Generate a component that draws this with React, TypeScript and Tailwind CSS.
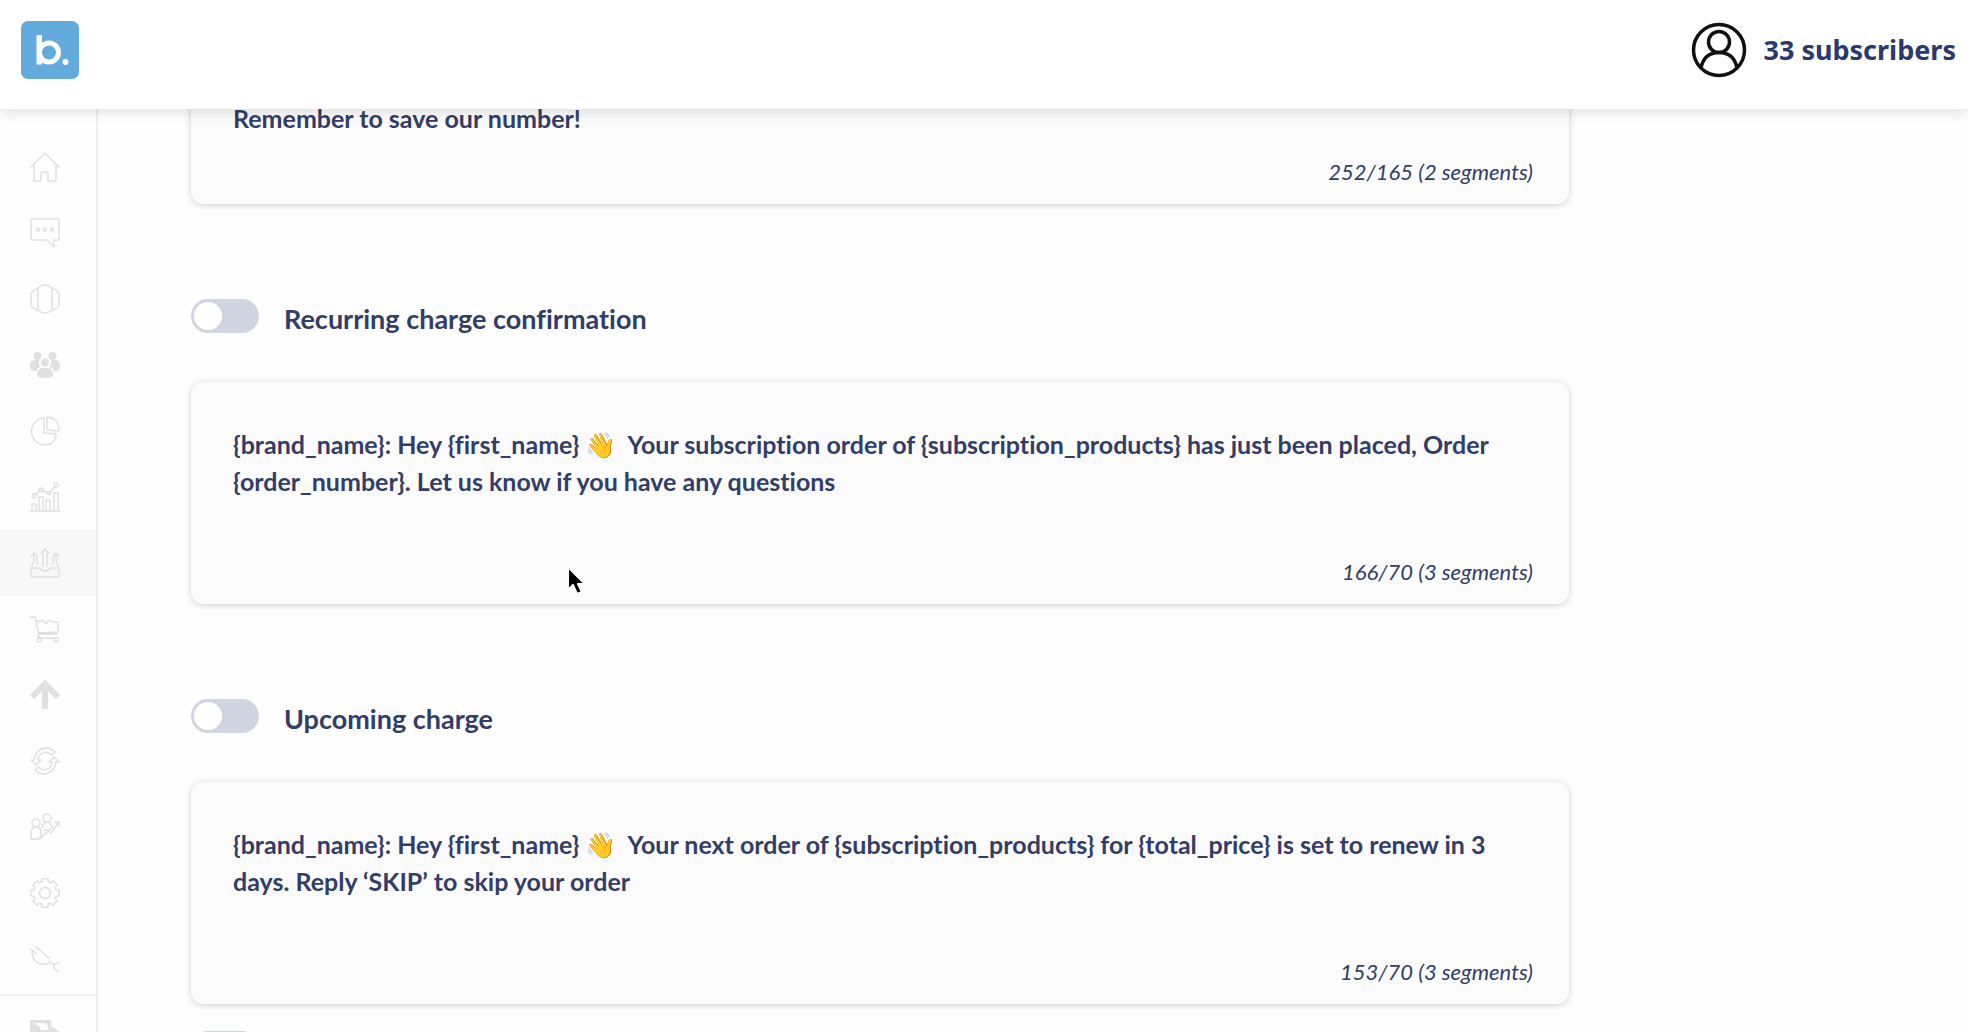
import type { ReactNode } from "react";

type Template = { id: string; title?: string; text: string; count: string };

const templates: Template[] = [
  { id: "opt-in", text: "\n\nRemember to save our number!", count: "252/165 (2 segments)" },
  {
    id: "recurring",
    title: "Recurring charge confirmation",
    text: "{brand_name}: Hey {first_name} 👋  Your subscription order of {subscription_products} has just been placed, Order {order_number}. Let us know if you have any questions",
    count: "166/70 (3 segments)",
  },
  {
    id: "upcoming",
    title: "Upcoming charge",
    text: "{brand_name}: Hey {first_name} 👋  Your next order of {subscription_products} for {total_price} is set to renew in 3 days. Reply ‘SKIP’ to skip your order",
    count: "153/70 (3 segments)",
  },
];

// Outline of an eight-toothed gear centred in a 30-unit box.
const gearPoints = Array.from({ length: 8 }, (_, tooth) =>
  [
    [-17, 11.5],
    [-12, 14.5],
    [12, 14.5],
    [17, 11.5],
  ].map(([offset, radius]) => {
    const angle = ((tooth * 45 + offset) * Math.PI) / 180;
    return `${(15 + radius * Math.cos(angle)).toFixed(2)},${(15 + radius * Math.sin(angle)).toFixed(2)}`;
  }),
)
  .flat()
  .join(" ");

const navItems: { label: string; active?: boolean; icon: ReactNode }[] = [
  { label: "Home", icon: <path d="M1 15 15 1l14 14M4 12.500V29h7v-8q0-1 1-1h5q1 0 1 1v8h8V12.500" /> },
  {
    label: "Messages",
    icon: (
      <>
        <path d="M2 1h26q1 0 1 1v19q0 1-1 1h-4v7l-7-7H2q-1 0-1-1V2q0-1 1-1Z" />
        <circle cx="8" cy="11.500" r="1.500" />
        <circle cx="15" cy="11.500" r="1.500" />
        <circle cx="22" cy="11.500" r="1.500" />
      </>
    ),
  },
  {
    label: "Products",
    icon: <path d="M8 4q7-6 14 0v22q-7 6-14 0ZM8 5H6L1 9v13l5 4h2M22 5h2l5 4v13l-5 4h-2" />,
  },
  {
    label: "Customers",
    icon: (
      <g fill="currentColor" stroke="none">
        <circle cx="7.500" cy="6" r="4" />
        <circle cx="22.500" cy="6" r="4" />
        <path d="M0 16q0-6 5-6h4q-1 5 2 7-4 1-5 4H3q-3-1-3-5ZM30 16q0-6-5-6h-4q1 5-2 7 4 1 5 4h3q3-1 3-5Z" />
        <circle cx="15" cy="12.500" r="4" />
        <path d="M7 25q0-7 6-7h4q6 0 6 7 0 3-8 3t-8-3Z" />
      </g>
    ),
  },
  {
    label: "Segments",
    icon: <path d="M14 2A13.500 13.500 0 1 0 22 27M14 2v15l12 1M17 1v13l12 1Q29 2 17 1ZM26 18q0 5-4 9" />,
  },
  {
    label: "Analytics",
    icon: (
      <>
        <path d="M0 29h30M2 29v-7h4v7M9 29V15h4v14M16 29V18h4v11M24 29V11h4v18M5 13l5-4M12 8l6 3M20 10l5-5" />
        <circle cx="4" cy="14" r="2" />
        <circle cx="11" cy="8" r="2" />
        <circle cx="19" cy="11" r="1.500" />
        <circle cx="26" cy="3" r="2" />
      </>
    ),
  },
  {
    label: "Automations",
    active: true,
    icon: <path d="M1 20h9q1 3 5 3t5-3h9v9H1ZM1 20l3-7V7M29 20l-3-7V7M1 8l3-3 3 3v8M13 18V5h-2l4-4 4 4h-2v13M23 16V8l3-3 3 3" />,
  },
  {
    label: "Orders",
    icon: (
      <>
        <path d="M0 3h5l4 17h18M6 7h8l2 3 3-4 3 2h6v10l-20 1M9 20l-1 4h20" />
        <circle cx="9" cy="26" r="2" />
        <circle cx="26" cy="26" r="2" />
      </>
    ),
  },
  {
    label: "Upgrade",
    icon: <path d="M2 17 15 4l13 13M15 5v24" strokeWidth="6" strokeLinejoin="miter" strokeLinecap="butt" />,
  },
  {
    label: "Sync",
    icon: (
      <path d="M4 14Q6 2 17 2q4 0 8 4l-3 3q-6-5-11-1-3 2-3 6h3l-5 5-5-5ZM26 16Q24 28 13 28q-4 0-8-4l3-3q6 5 11 1 3-2 3-6h-3l5-5 5 5Z" />
    ),
  },
  {
    label: "Referrals",
    icon: (
      <>
        <circle cx="6" cy="11" r="4" />
        <circle cx="17" cy="6" r="4" />
        <path d="M1 27v-6q0-6 5-6t5 6v3l-3 3ZM12 16q1-6 5-6t5 5l-3 3h-5M10 27l8-8 3 2 8-11M25 10h4v4" />
      </>
    ),
  },
  {
    label: "Settings",
    icon: (
      <>
        <polygon points={gearPoints} />
        <circle cx="15" cy="15" r="5.500" />
      </>
    ),
  },
  {
    label: "Integrations",
    icon: <path d="M1 5l5 5M6 3l13 11M2 8q0 9 8 12h7l3-2M21 20l8-1M24 20v4l4 4" />,
  },
];

function NavIcon({ children }: { children: ReactNode }) {
  return (
    <svg
      viewBox="0 0 30 30"
      className="size-[30px] overflow-visible"
      fill="none"
      stroke="currentColor"
      strokeWidth="1.500"
      strokeLinejoin="round"
      strokeLinecap="round"
      aria-hidden="true"
    >
      {children}
    </svg>
  );
}

function Header() {
  return (
    <header className="relative z-10 flex shrink-0 items-center justify-between bg-white pt-[21px] pr-3 pb-[30px] pl-[21px] shadow-[0_2px_14px_rgba(0,0,0,0.14)]">
      <a href="#" aria-label="Dashboard">
        <svg viewBox="0 0 58 58" className="size-[58px]" fill="none" aria-hidden="true">
          <rect width="58" height="58" rx="7" fill="#64abdd" />
          <circle cx="28" cy="31.500" r="9.500" stroke="#fff" strokeWidth="5" />
          <rect x="15.500" y="14" width="5.500" height="29.500" fill="#fff" />
          <circle cx="44.500" cy="41" r="3" fill="#fff" />
        </svg>
      </a>
      <div className="flex items-center gap-4 text-[#2a3a6e]">
        <svg viewBox="0 0 56 56" className="size-14" fill="none" stroke="#111" strokeWidth="3.500" aria-hidden="true">
          <circle cx="28" cy="28" r="25.500" />
          <circle cx="28" cy="20" r="10.500" />
          <path d="M10 46q3-15.500 18-15.500T46 46" />
        </svg>
        <span className="font-['Noto_Sans',sans-serif] text-[27px] leading-9 font-bold">33 subscribers</span>
      </div>
    </header>
  );
}

function Sidebar() {
  return (
    <nav aria-label="Main" className="flex w-[98px] shrink-0 flex-col border-r-2 border-[#f0f0f0] pt-[25px] text-[#e0e0e0]">
      {navItems.map((item) => (
        <a
          key={item.label}
          href="#"
          aria-label={item.label}
          className={`flex h-[66px] shrink-0 items-center pl-[30px] ${item.active ? "bg-[#f8f8f8]" : ""}`}
        >
          <NavIcon>{item.icon}</NavIcon>
        </a>
      ))}
      <a href="#" aria-label="Log out" className="mt-[2px] flex shrink-0 border-t-2 border-[#f0f0f0] pt-6 pl-[30px]">
        <NavIcon>
          <path
            fill="currentColor"
            stroke="none"
            fillRule="evenodd"
            d="M0 0h21v6l9 6-9 7v11H0ZM4 3l6 4v3h8V6l-2-3Z"
          />
        </NavIcon>
      </a>
    </nav>
  );
}

function Toggle({ id, label }: { id: string; label?: string }) {
  return (
    <input
      id={id}
      type="checkbox"
      role="switch"
      aria-label={label}
      className="flex h-[34px] w-[68px] shrink-0 appearance-none items-center rounded-full bg-[#d1d4e1] px-[3px] before:size-7 before:rounded-full before:bg-white checked:justify-end checked:bg-[#64abdd]"
    />
  );
}

function TemplateCard({ item }: { item: Template }) {
  return (
    <section>
      {item.title && (
        <div className="mb-[49px] flex h-[34px] items-center gap-[25px]">
          <Toggle id={item.id} />
          <label htmlFor={item.id} className="pt-1.5 text-[27px] leading-[34px] font-bold">
            {item.title}
          </label>
        </div>
      )}
      <div className="rounded-xl bg-[#fbfbfc] px-[42px] pt-11 pb-[17px] shadow-[0_1px_6px_rgba(0,0,0,0.2)]">
        <textarea
          aria-label={item.title ?? "Welcome message"}
          rows={3}
          defaultValue={item.text}
          className="block w-full resize-none overflow-hidden bg-transparent text-[25px] leading-[37px] font-bold outline-none"
        />
        <p className="mt-5 -mr-1.5 text-right text-[22px] leading-[30px] italic">{item.count}</p>
      </div>
    </section>
  );
}

export default function App() {
  return (
    <div className="flex h-screen flex-col overflow-hidden bg-[#fefefe] font-['Lato',sans-serif] text-[#323d68] [font-variant-ligatures:none]">
      <Header />
      <div className="flex min-h-0 flex-1">
        <Sidebar />
        <main className="min-w-0 flex-1 overflow-hidden pr-8 pl-[93px]">
          <div className="-mt-[127px] flex max-w-[1378px] flex-col gap-[95px]">
            {templates.map((item) => (
              <TemplateCard key={item.id} item={item} />
            ))}
          </div>
          <div className="mt-[27px]">
            <Toggle id="next-template" label="Next message" />
          </div>
        </main>
      </div>
      <svg viewBox="0 0 20 30" className="absolute top-[566px] left-[566px] z-20 h-[30px] w-5" aria-hidden="true">
        <path
          d="M2 1v23l5-5 4 9 5-2-4-8h7Z"
          fill="#000"
          stroke="#fff"
          strokeWidth="2"
          strokeLinejoin="round"
        />
      </svg>
    </div>
  );
}
